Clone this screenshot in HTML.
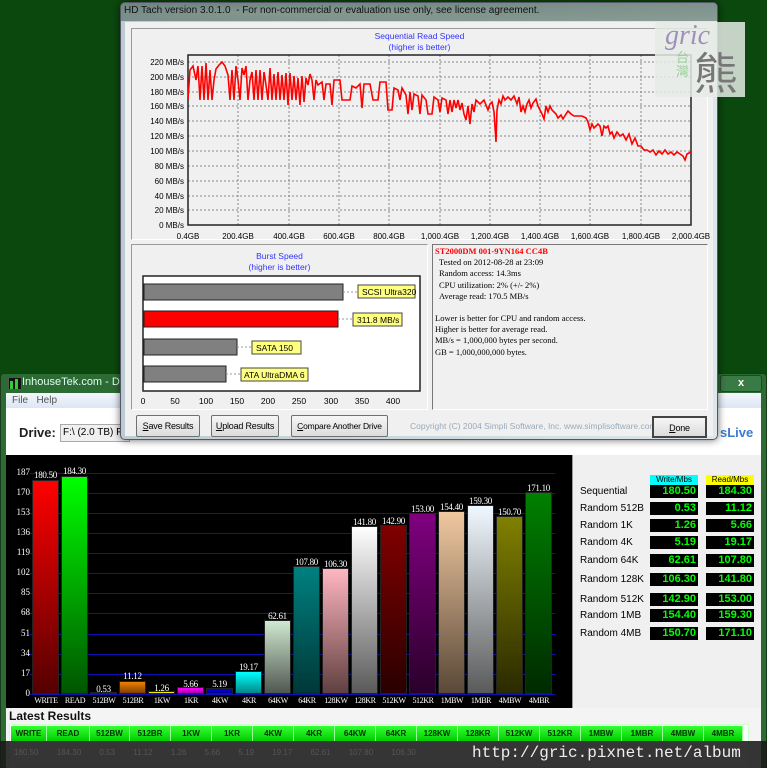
<!DOCTYPE html>
<html><head><meta charset="utf-8"><style>
*{margin:0;padding:0;box-sizing:border-box}
body{width:767px;height:768px;overflow:hidden;background:#0b480e;position:relative;font-family:"Liberation Sans",sans-serif}
.a{position:absolute}
.serif{font-family:"Liberation Serif",serif}
.btn{position:absolute;top:415px;height:22px;border:1px solid #707070;border-radius:2px;background:linear-gradient(#f6f6f6,#dcdcdc);font-size:9px;text-align:center;line-height:20px;color:#000;white-space:nowrap;letter-spacing:-0.2px;overflow:hidden}
.bar{position:absolute;width:27px;bottom:74px;border:1px solid #222}
.vl{position:absolute;width:35px;text-align:center;font-size:9px;color:#fff;font-family:"Liberation Serif",serif;letter-spacing:-0.3px}
.xl{position:absolute;top:696px;width:30px;text-align:center;font-size:8px;color:#fff;font-family:"Liberation Serif",serif;letter-spacing:-0.4px;white-space:nowrap}
.yl{position:absolute;left:8px;width:22px;text-align:right;font-size:9px;color:#fff;font-family:"Liberation Serif",serif}
.gl{position:absolute;left:30px;width:525px;height:1px;background:#1010b0}
.rl{position:absolute;left:580px;font-size:10px;color:#000}
.bx{position:absolute;height:13px;background:#000;color:#0f0;font-size:11px;font-weight:bold;text-align:right;padding-right:2px;line-height:13px;width:48px}
.tc{position:absolute;top:726px;height:15px;background:linear-gradient(#3f3,#0c0);color:#030;font-size:8px;font-weight:bold;text-align:center;line-height:15px;border-right:1px solid #9f9}
</style></head><body>

<div class="a" style="left:0;top:373px;width:767px;height:395px;background:#2d6b34;border:1px solid #1a3a1a;border-radius:4px 4px 0 0"></div>
<div class="a" style="left:8px;top:377px;width:14px;height:13px;background:#111;border:1px solid #555"></div>
<div class="a" style="left:10px;top:381px;width:3px;height:8px;background:#3c3"></div>
<div class="a" style="left:15px;top:379px;width:3px;height:10px;background:#3c3"></div>
<div class="a" style="left:22px;top:376px;font-size:11px;color:#dfe">InhouseTek.com - Disk</div>
<div class="a" style="left:720px;top:375px;width:42px;height:17px;background:#3a7a45;border:1px solid #1d4a24;border-radius:3px;color:#fff;font-size:11px;font-weight:bold;text-align:center;line-height:15px">x</div>
<div class="a" style="left:6px;top:393px;width:755px;height:15px;background:linear-gradient(#f4f7fc,#dce6f4)"></div>
<div class="a" style="left:12px;top:395px;font-size:10px;color:#555">File &nbsp; Help</div>
<div class="a" style="left:6px;top:408px;width:755px;height:47px;background:#fff"></div>
<div class="a" style="left:19px;top:425px;font-size:13px;font-weight:bold;color:#222">Drive:</div>
<div class="a" style="left:60px;top:424px;width:70px;height:18px;background:#f0f0f0;border:1px solid #aaa;font-size:10px;line-height:16px;padding-left:2px;white-space:nowrap;overflow:hidden">F:\ (2.0 TB) F</div>
<div class="a" style="left:720px;top:425px;font-size:13px;font-weight:bold;color:#3a7ad0">sLive</div>

<div class="a" style="left:6px;top:455px;width:566px;height:253px;background:#000"></div>
<div class="a" style="left:572px;top:455px;width:189px;height:253px;background:#f0f0f0;border-left:1px solid #999"></div>
<div class="gl" style="top:473px"></div><div class="gl" style="top:493px"></div><div class="gl" style="top:513px"></div><div class="gl" style="top:533px"></div><div class="gl" style="top:553px"></div><div class="gl" style="top:573px"></div><div class="gl" style="top:593px"></div><div class="gl" style="top:613px"></div><div class="gl" style="top:634px"></div><div class="gl" style="top:654px"></div><div class="gl" style="top:674px"></div><div class="gl" style="top:694px"></div>
<div class="yl" style="top:467px">187</div><div class="yl" style="top:487px">170</div><div class="yl" style="top:507px">153</div><div class="yl" style="top:527px">136</div><div class="yl" style="top:547px">119</div><div class="yl" style="top:567px">102</div><div class="yl" style="top:587px">85</div><div class="yl" style="top:607px">68</div><div class="yl" style="top:628px">51</div><div class="yl" style="top:648px">34</div><div class="yl" style="top:668px">17</div><div class="yl" style="top:688px">0</div>

<div class="bar" style="left:32px;height:214px;background:linear-gradient(#f00,#500)"></div>
<div class="bar" style="left:61px;height:218px;background:linear-gradient(#0f0,#050)"></div>
<div class="bar" style="left:90px;height:2px;background:#888"></div>
<div class="bar" style="left:119px;height:13px;background:linear-gradient(#f08000,#804000)"></div>
<div class="bar" style="left:148px;height:3px;background:#ee0"></div>
<div class="bar" style="left:177px;height:7px;background:linear-gradient(#f0f,#a0a)"></div>
<div class="bar" style="left:206px;height:6px;background:linear-gradient(#00f,#008)"></div>
<div class="bar" style="left:235px;height:23px;background:linear-gradient(#0ff,#088)"></div>
<div class="bar" style="left:264px;height:74px;background:linear-gradient(#d0e8d0,#505850)"></div>
<div class="bar" style="left:293px;height:128px;background:linear-gradient(#008080,#003838)"></div>
<div class="bar" style="left:322px;height:126px;background:linear-gradient(#ffb6c1,#604040)"></div>
<div class="bar" style="left:351px;height:168px;background:linear-gradient(#fff,#5a5a5a)"></div>
<div class="bar" style="left:380px;height:169px;background:linear-gradient(#800000,#2a0000)"></div>
<div class="bar" style="left:409px;height:181px;background:linear-gradient(#800080,#2a002a)"></div>
<div class="bar" style="left:438px;height:183px;background:linear-gradient(#f0c8a0,#5a4838)"></div>
<div class="bar" style="left:467px;height:189px;background:linear-gradient(#f0f8ff,#5a5a5a)"></div>
<div class="bar" style="left:496px;height:178px;background:linear-gradient(#808000,#2a2a00)"></div>
<div class="bar" style="left:525px;height:202px;background:linear-gradient(#008000,#002a00)"></div>

<div class="vl" style="left:28px;top:470px">180.50</div><div class="vl" style="left:57px;top:466px">184.30</div><div class="vl" style="left:86px;top:684px">0.53</div><div class="vl" style="left:115px;top:671px">11.12</div><div class="vl" style="left:144px;top:683px">1.26</div><div class="vl" style="left:173px;top:679px">5.66</div><div class="vl" style="left:202px;top:679px">5.19</div><div class="vl" style="left:231px;top:662px">19.17</div><div class="vl" style="left:260px;top:611px">62.61</div><div class="vl" style="left:289px;top:557px">107.80</div><div class="vl" style="left:318px;top:559px">106.30</div><div class="vl" style="left:347px;top:517px">141.80</div><div class="vl" style="left:376px;top:516px">142.90</div><div class="vl" style="left:405px;top:504px">153.00</div><div class="vl" style="left:434px;top:502px">154.40</div><div class="vl" style="left:463px;top:496px">159.30</div><div class="vl" style="left:492px;top:507px">150.70</div><div class="vl" style="left:521px;top:483px">171.10</div>

<div class="xl" style="left:31px">WRITE</div><div class="xl" style="left:60px">READ</div><div class="xl" style="left:89px">512BW</div><div class="xl" style="left:118px">512BR</div><div class="xl" style="left:147px">1KW</div><div class="xl" style="left:176px">1KR</div><div class="xl" style="left:205px">4KW</div><div class="xl" style="left:234px">4KR</div><div class="xl" style="left:263px">64KW</div><div class="xl" style="left:292px">64KR</div><div class="xl" style="left:321px">128KW</div><div class="xl" style="left:350px">128KR</div><div class="xl" style="left:379px">512KW</div><div class="xl" style="left:408px">512KR</div><div class="xl" style="left:437px">1MBW</div><div class="xl" style="left:466px">1MBR</div><div class="xl" style="left:495px">4MBW</div><div class="xl" style="left:524px">4MBR</div>

<div class="a" style="left:650px;top:475px;width:48px;height:10px;background:#0ff;font-size:8px;text-align:center;line-height:10px">Write/Mbs</div>
<div class="a" style="left:706px;top:475px;width:48px;height:10px;background:#ff0;font-size:8px;text-align:center;line-height:10px">Read/Mbs</div>
<div class="rl" style="top:486px">Sequential</div><div class="bx" style="left:650px;top:485px">180.50</div><div class="bx" style="left:706px;top:485px">184.30</div>
<div class="rl" style="top:503px">Random 512B</div><div class="bx" style="left:650px;top:502px">0.53</div><div class="bx" style="left:706px;top:502px">11.12</div>
<div class="rl" style="top:520px">Random 1K</div><div class="bx" style="left:650px;top:519px">1.26</div><div class="bx" style="left:706px;top:519px">5.66</div>
<div class="rl" style="top:537px">Random 4K</div><div class="bx" style="left:650px;top:536px">5.19</div><div class="bx" style="left:706px;top:536px">19.17</div>
<div class="rl" style="top:555px">Random 64K</div><div class="bx" style="left:650px;top:554px">62.61</div><div class="bx" style="left:706px;top:554px">107.80</div>
<div class="rl" style="top:574px">Random 128K</div><div class="bx" style="left:650px;top:573px">106.30</div><div class="bx" style="left:706px;top:573px">141.80</div>
<div class="rl" style="top:594px">Random 512K</div><div class="bx" style="left:650px;top:593px">142.90</div><div class="bx" style="left:706px;top:593px">153.00</div>
<div class="rl" style="top:610px">Random 1MB</div><div class="bx" style="left:650px;top:609px">154.40</div><div class="bx" style="left:706px;top:609px">159.30</div>
<div class="rl" style="top:628px">Random 4MB</div><div class="bx" style="left:650px;top:627px">150.70</div><div class="bx" style="left:706px;top:627px">171.10</div>

<div class="a" style="left:6px;top:708px;width:755px;height:60px;background:#f4f4f4"></div>
<div class="a" style="left:9px;top:709px;font-size:12px;font-weight:bold;color:#111">Latest Results</div>
<div class="a" style="left:9px;top:724px;width:740px;height:44px;background:#fff;border:1px solid #cfc"></div>
<div class="tc" style="left:11px;width:36px">WRITE</div><div class="tc" style="left:47px;width:43px">READ</div><div class="tc" style="left:90px;width:40px">512BW</div><div class="tc" style="left:130px;width:41px">512BR</div><div class="tc" style="left:171px;width:41px">1KW</div><div class="tc" style="left:212px;width:41px">1KR</div><div class="tc" style="left:253px;width:41px">4KW</div><div class="tc" style="left:294px;width:41px">4KR</div><div class="tc" style="left:335px;width:41px">64KW</div><div class="tc" style="left:376px;width:41px">64KR</div><div class="tc" style="left:417px;width:41px">128KW</div><div class="tc" style="left:458px;width:41px">128KR</div><div class="tc" style="left:499px;width:41px">512KW</div><div class="tc" style="left:540px;width:41px">512KR</div><div class="tc" style="left:581px;width:41px">1MBW</div><div class="tc" style="left:622px;width:41px">1MBR</div><div class="tc" style="left:663px;width:41px">4MBW</div><div class="tc" style="left:704px;width:39px">4MBR</div>
<div class="a" style="left:0;top:741px;width:767px;height:27px;background:rgba(25,25,25,0.88)"></div>
<div class="a" style="left:14px;top:748px;font-size:8px;color:#555;word-spacing:16px">180.50 184.30 0.53 11.12 1.26 5.66 5.19 19.17 62.61 107.80 106.30</div>
<div class="a" style="left:472px;top:744px;font-size:16px;color:#eee;font-family:'Liberation Mono',monospace">http://gric.pixnet.net/album</div>

<div class="a" style="left:120px;top:2px;width:598px;height:438px;background:linear-gradient(90deg,#bccbd2,#dde6ea);border:1px solid #556;border-radius:5px;box-shadow:0 0 8px rgba(0,0,0,.6)"></div>
<div class="a" style="left:121px;top:3px;width:420px;height:18px;background:radial-gradient(ellipse at 40% 50%,rgba(255,255,255,.45),rgba(255,255,255,0) 70%)"></div>
<div class="a" style="left:121px;top:3px;width:596px;height:18px;background:linear-gradient(#2f4a3c,#456052);opacity:.55;border-radius:4px 4px 0 0"></div>
<div class="a" style="left:124px;top:5px;font-size:10px;color:#111">HD Tach version 3.0.1.0 &nbsp;- For non-commercial or evaluation use only, see license agreement.</div>
<div class="a" style="left:125px;top:22px;width:588px;height:414px;background:#f0f0f0"></div>
<div class="a" style="left:131px;top:28px;width:577px;height:212px;border:1px solid #999;border-right-color:#fff;border-bottom-color:#fff"></div>
<div class="a" style="left:131px;top:31px;width:577px;text-align:center;font-size:8.5px;color:#33f;line-height:11px">Sequential Read Speed<br>(higher is better)</div>
<svg class="a" style="left:0;top:0" width="767" height="768">
<g stroke="#888" stroke-width="1" stroke-dasharray="2,2">
<line x1="188" y1="62" x2="691" y2="62"/><line x1="188" y1="77" x2="691" y2="77"/><line x1="188" y1="92" x2="691" y2="92"/><line x1="188" y1="106" x2="691" y2="106"/><line x1="188" y1="121" x2="691" y2="121"/><line x1="188" y1="136" x2="691" y2="136"/><line x1="188" y1="151" x2="691" y2="151"/><line x1="188" y1="166" x2="691" y2="166"/><line x1="188" y1="181" x2="691" y2="181"/><line x1="188" y1="196" x2="691" y2="196"/><line x1="188" y1="210" x2="691" y2="210"/>
<line x1="238" y1="55" x2="238" y2="225"/><line x1="289" y1="55" x2="289" y2="225"/><line x1="339" y1="55" x2="339" y2="225"/><line x1="389" y1="55" x2="389" y2="225"/><line x1="440" y1="55" x2="440" y2="225"/><line x1="490" y1="55" x2="490" y2="225"/><line x1="540" y1="55" x2="540" y2="225"/><line x1="590" y1="55" x2="590" y2="225"/><line x1="641" y1="55" x2="641" y2="225"/>
<line x1="168" y1="286" x2="168" y2="391"/><line x1="205" y1="286" x2="205" y2="391"/><line x1="237" y1="286" x2="237" y2="391"/><line x1="268" y1="286" x2="268" y2="391"/><line x1="299" y1="286" x2="299" y2="391"/><line x1="331" y1="286" x2="331" y2="391"/><line x1="362" y1="286" x2="362" y2="391"/><line x1="393" y1="286" x2="393" y2="391"/>
</g>
<rect x="188" y="55" width="503" height="170" fill="none" stroke="#222" stroke-width="1.5"/>
<polyline fill="none" stroke="#f00" stroke-width="1.6" points="188,99 190,70 193,66 196,80 198,66 200,100 202,66 204,100 206,63 208,100 210,70 212,100 214,80 216,69 219,65 222,62 225,66 228,75 230,100 232,70 234,100 236,66 238,80 240,100 242,68 244,75 246,66 248,100 250,80 252,72 254,100 256,70 258,100 260,70 262,100 264,72 266,85 268,100 270,68 272,100 274,74 276,100 278,72 280,100 282,75 284,100 286,73 288,105 290,73 292,100 294,76 296,100 298,78 300,105 302,76 304,102 306,78 308,85 310,74 312,80 314,100 316,80 318,85 322,82 324,100 326,84 330,84 332,105 334,80 340,80 342,100 350,100 352,86 356,88 360,84 362,108 364,84 370,84 373,100 378,100 380,82 386,82 388,110 392,110 394,88 398,90 400,100 402,88 406,95 408,114 410,92 412,110 414,94 418,96 420,114 422,95 426,100 428,114 432,114 434,97 438,100 440,112 442,98 446,100 448,114 450,100 452,112 454,100 456,108 458,100 460,110 462,103 464,114 466,120 468,106 470,124 472,104 474,112 476,100 480,104 484,100 488,110 490,104 492,102 494,112 496,142 497,110 499,100 501,104 503,96 505,100 508,97 511,100 514,96 517,104 519,97 521,112 523,106 525,112 527,104 529,100 531,108 533,103 536,99 538,106 542,114 544,119 546,106 548,112 550,106 552,110 556,114 558,118 561,115 563,119 566,114 568,111 571,114 574,116 578,116 582,116 586,118 588,122 590,130 592,124 594,128 598,124 600,126 602,136 604,126 606,128 608,126 610,134 612,132 614,138 617,132 620,136 623,134 626,140 629,134 632,144 635,138 638,146 641,146 644,150 647,150 650,152 653,150 656,155 659,151 662,154 665,150 668,154 671,152 674,155 677,152 680,154 683,156 685,160 687,154 691,152"/>
<g font-family="Liberation Sans" font-size="8" fill="#000" text-anchor="end">
<text x="184" y="65">220 MB/s</text><text x="184" y="80">200 MB/s</text><text x="184" y="95">180 MB/s</text><text x="184" y="109">160 MB/s</text><text x="184" y="124">140 MB/s</text><text x="184" y="139">120 MB/s</text><text x="184" y="154">100 MB/s</text><text x="184" y="169">80 MB/s</text><text x="184" y="184">60 MB/s</text><text x="184" y="199">40 MB/s</text><text x="184" y="213">20 MB/s</text><text x="184" y="228">0 MB/s</text>
</g>
<g font-family="Liberation Sans" font-size="8" fill="#000" text-anchor="middle">
<text x="188" y="239">0.4GB</text><text x="238" y="239">200.4GB</text><text x="289" y="239">400.4GB</text><text x="339" y="239">600.4GB</text><text x="389" y="239">800.4GB</text><text x="440" y="239">1,000.4GB</text><text x="490" y="239">1,200.4GB</text><text x="540" y="239">1,400.4GB</text><text x="590" y="239">1,600.4GB</text><text x="641" y="239">1,800.4GB</text><text x="691" y="239">2,000.4GB</text>
</g>
<rect x="143" y="276" width="277" height="115" fill="#fff" stroke="#222" stroke-width="1.5"/>
<rect x="144" y="284" width="199" height="16" fill="#808080" stroke="#222"/>
<rect x="144" y="311" width="194" height="16" fill="#f00" stroke="#222"/>
<rect x="144" y="339" width="93" height="16" fill="#808080" stroke="#222"/>
<rect x="144" y="366" width="82" height="16" fill="#808080" stroke="#222"/>
<g stroke="#999" stroke-dasharray="2,2"><line x1="343" y1="292" x2="358" y2="292"/><line x1="338" y1="319" x2="353" y2="319"/><line x1="237" y1="347" x2="252" y2="347"/><line x1="226" y1="374" x2="241" y2="374"/></g>
<g fill="#ffff80" stroke="#444"><rect x="358" y="285" width="57" height="13"/><rect x="353" y="313" width="49" height="13"/><rect x="252" y="341" width="49" height="13"/><rect x="241" y="368" width="67" height="13"/></g>
<g font-family="Liberation Sans" font-size="8.5" fill="#000"><text x="362" y="295">SCSI Ultra320</text><text x="357" y="323">311.8 MB/s</text><text x="256" y="351">SATA 150</text><text x="244" y="378">ATA UltraDMA 6</text></g>
<g font-family="Liberation Sans" font-size="8.5" fill="#000" text-anchor="middle"><text x="143" y="404">0</text><text x="175" y="404">50</text><text x="206" y="404">100</text><text x="237" y="404">150</text><text x="268" y="404">200</text><text x="299" y="404">250</text><text x="331" y="404">300</text><text x="362" y="404">350</text><text x="393" y="404">400</text></g>
</svg>
<div class="a" style="left:131px;top:244px;width:297px;height:166px;border:1px solid #999;border-right-color:#fff;border-bottom-color:#fff"></div>
<div class="a" style="left:131px;top:251px;width:297px;text-align:center;font-size:8.5px;color:#33f;line-height:11px">Burst Speed<br>(higher is better)</div>
<div class="a serif" style="left:432px;top:244px;width:276px;height:166px;border:1px solid #777;border-right-color:#fff;border-bottom-color:#fff;font-size:8.5px;line-height:11.2px;color:#000;padding:1px 0 0 2px">
<div style="color:#f00;font-weight:bold">ST2000DM 001-9YN164 CC4B</div>
<div style="padding-left:4px">Tested on 2012-08-28 at 23:09<br>Random access: 14.3ms<br>CPU utilization: 2% (+/- 2%)<br>Average read: 170.5 MB/s</div>
<div style="margin-top:11px">Lower is better for CPU and random access.<br>Higher is better for average read.<br>MB/s = 1,000,000 bytes per second.<br>GB = 1,000,000,000 bytes.</div>
</div>
<div class="btn" style="left:136px;width:64px"><u>S</u>ave Results</div>
<div class="btn" style="left:211px;width:68px"><u>U</u>pload Results</div>
<div class="btn" style="left:291px;width:97px;font-size:8.5px"><u>C</u>ompare Another Drive</div>
<div class="a" style="left:410px;top:421px;font-size:8.5px;color:#9ab;white-space:nowrap">Copyright (C) 2004 Simpli Software, Inc. www.simplisoftware.com</div>
<div class="btn" style="left:652px;top:416px;width:55px;border:2px solid #444;border-radius:0"><u>D</u>one</div>

<div class="a" style="left:655px;top:22px;width:90px;height:75px;background:rgba(230,235,230,.85)"></div>
<div class="a serif" style="left:665px;top:20px;font-size:28px;font-style:italic;color:#a090b8">gric</div>
<div class="a" style="left:676px;top:50px;font-size:13px;line-height:14px;color:#9c9;font-family:'Noto Sans CJK TC',sans-serif">台<br>灣</div>
<div class="a" style="left:694px;top:46px;font-size:44px;line-height:48px;color:#777;font-family:'Noto Sans CJK TC',sans-serif">熊</div>
</body></html>
